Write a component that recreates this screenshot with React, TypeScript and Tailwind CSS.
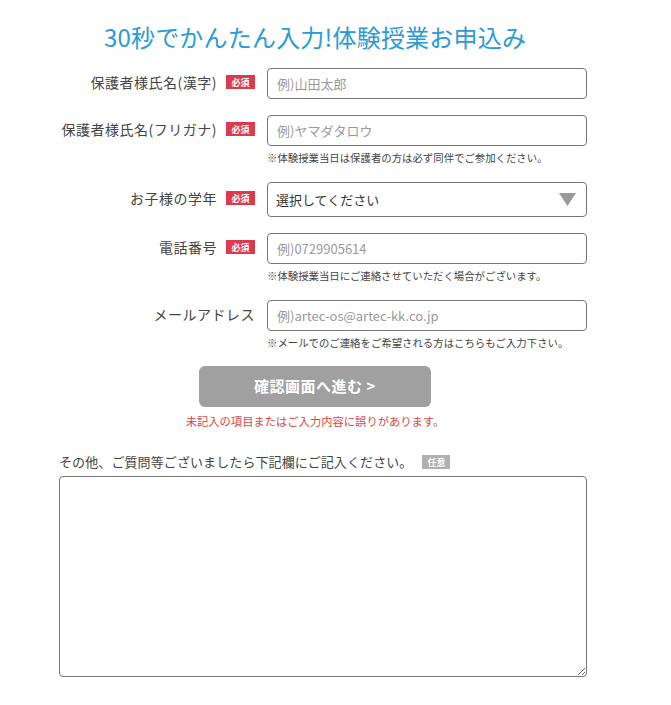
import React from "react";

const font = {
  fontFamily: '"Noto Sans CJK JP", "Noto Sans", sans-serif',
};

type Row = {
  label: string;
  required: boolean;
  placeholder?: string;
  select?: boolean;
  note?: string;
};

const rows: Row[] = [
  { label: "保護者様氏名(漢字)", required: true, placeholder: "例)山田太郎" },
  {
    label: "保護者様氏名(フリガナ)",
    required: true,
    placeholder: "例)ヤマダタロウ",
    note: "※体験授業当日は保護者の方は必ず同伴でご参加ください。",
  },
  { label: "お子様の学年", required: true, select: true },
  {
    label: "電話番号",
    required: true,
    placeholder: "例)0729905614",
    note: "※体験授業当日にご連絡させていただく場合がございます。",
  },
  {
    label: "メールアドレス",
    required: false,
    placeholder: "例)artec-os@artec-kk.co.jp",
    note: "※メールでのご連絡をご希望される方はこちらもご入力下さい。",
  },
];

function Badge({ kind }: { kind: "req" | "opt" }) {
  return (
    <span
      className={`inline-flex h-[14px] items-center justify-center px-[4px] text-[9px] font-bold leading-none text-white ${
        kind === "req" ? "w-[29px] bg-[#dc3a4e]" : "w-[28px] bg-[#b0b0b0]"
      }`}
    >
      {kind === "req" ? "必須" : "任意"}
    </span>
  );
}

export default function App() {
  return (
    <div className="min-h-[705px] w-full bg-white" style={font}>
      <div className="w-[630px] pt-[21px]">
        <h1 className="text-center text-[24px] leading-[32px] font-normal tracking-[0.2px] text-[#2b9ad7]">
          30秒でかんたん入力!体験授業お申込み
        </h1>

        <div className="mt-[15px] ml-[59px] w-[528px]">
          {rows.map((r, i) => (
            <div key={i} className={i === 0 ? "" : "mt-[16px]"}>
              <div className="flex items-start">
                <div
                  className={`flex w-[196px] items-center justify-end gap-[9px] ${
                    r.select ? "pt-[6px]" : "pt-[4px]"
                  }`}
                >
                  <span className="text-[14px] leading-[20px] tracking-[0.5px] text-[#444]">
                    {r.label}
                  </span>
                  {r.required && <Badge kind="req" />}
                </div>
                <div className="ml-[12px] w-[320px]">
                  {r.select ? (
                    <div className="flex h-[35px] items-center justify-between rounded-[4px] border border-[#777] pl-[8px] pr-[10px]">
                      <span className="text-[13px] text-[#333]">選択してください</span>
                      <svg width="17" height="13" viewBox="0 0 17 13">
                        <polygon points="0,0 17,0 8.5,13" fill="#9a9a9a" />
                      </svg>
                    </div>
                  ) : (
                    <div className="flex h-[31px] items-center rounded-[4px] border border-[#777] px-[9px]">
                      <span className="text-[13px] text-[#9a9a9a]">{r.placeholder}</span>
                    </div>
                  )}
                </div>
              </div>
              {r.note && (
                <div className="mt-[4px] ml-[208px] text-[10.4px] leading-[16px] text-[#444]">
                  {r.note}
                </div>
              )}
            </div>
          ))}
        </div>

        <div className="mt-[15px] flex flex-col items-center">
          <button className="h-[41px] w-[232px] rounded-[6px] bg-[#a0a0a0] text-[15px] font-bold tracking-[0.5px] text-white">
            確認画面へ進む &gt;
          </button>
          <p className="mt-[6px] text-[11.3px] leading-[16px] text-[#e24545]">
            未記入の項目またはご入力内容に誤りがあります。
          </p>
        </div>

        <div className="mt-[23px] ml-[59px] w-[528px]">
          <div className="flex items-center gap-[10px]">
            <span className="text-[13px] leading-[20px] tracking-[0.1px] text-[#444]">
              その他、ご質問等ございましたら下記欄にご記入ください。
            </span>
            <Badge kind="opt" />
          </div>
          <textarea className="mt-[4px] block h-[201px] w-[528px] rounded-[4px] border border-[#777] bg-white" />
        </div>
      </div>
    </div>
  );
}
